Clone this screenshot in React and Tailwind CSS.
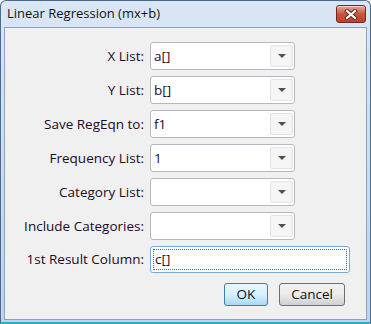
import React from "react";

const rows = [
  { label: "X List:", value: "a[]" },
  { label: "Y List:", value: "b[]" },
  { label: "Save RegEqn to:", value: "f1" },
  { label: "Frequency List:", value: "1" },
  { label: "Category List:", value: "" },
  { label: "Include Categories:", value: "" },
];

const CloseButton = () => (
  <div className="w-[30px] h-[18px] rounded-[3px] border border-[#6d2a22] bg-gradient-to-b from-[#e8a99d] via-[#c9553f] to-[#c2402a] flex items-center justify-center shadow-[inset_0_1px_0_rgba(255,255,255,0.5)]">
    <svg width="14" height="11" viewBox="0 0 14 11">
      <path d="M3 2 L11 9 M11 2 L3 9" stroke="#5a2a24" strokeWidth="4" strokeLinecap="square" />
      <path d="M3 2 L11 9 M11 2 L3 9" stroke="#ffffff" strokeWidth="2.2" strokeLinecap="square" />
    </svg>
  </div>
);

const Combo = ({ value }) => (
  <div className="w-[145px] h-[28px] rounded-[3px] border border-[#b5b8c0] bg-white flex items-center pl-[3px] pr-[1px]">
    <span className="flex-1 text-[13.5px] text-[#1b0a2a]">{value}</span>
    <div className="w-[23px] h-[22px] rounded-[2px] border border-[#e3e3e3] bg-[#f5f5f5] flex items-center justify-center">
      <svg width="8" height="4" viewBox="0 0 8 4">
        <path d="M0 0 H8 L4 4 Z" fill="#505050" />
      </svg>
    </div>
  </div>
);

const Row = ({ label, children }) => (
  <div className="flex items-center gap-[6px]">
    <div className="w-[139px] text-right text-[13.5px] text-[#1b0a2a] whitespace-nowrap">{label}</div>
    {children}
  </div>
);

export default function App() {
  return (
    <div
      className="w-[371px] h-[324px] flex flex-col bg-gradient-to-b from-[#d9e6f5] to-[#bdd3ee] border border-[#4d6a8c] rounded-t-[6px] border-b-2 border-b-[#35a7c8]"
      style={{ fontFamily: '"Open Sans", "DejaVu Sans", sans-serif' }}
    >
      <div className="h-[26px] flex items-center justify-between pl-[6px] pr-[4px]">
        <span className="text-[13px] text-[#141414]">Linear Regression (mx+b)</span>
        <CloseButton />
      </div>
      <div className="flex-1 mx-[3px] mb-[2px] bg-[#f0f0f0] border border-[#8aa2c0] flex flex-col pt-[14px]">
        <div className="flex flex-col gap-[6px]">
          {rows.map((r) => (
            <Row key={r.label} label={r.label}>
              <Combo value={r.value} />
            </Row>
          ))}
          <Row label="1st Result Column:">
            <div className="w-[200px] h-[27px] rounded-[3px] border border-[#7aa9d8] bg-white p-[2px]">
              <div className="h-full border border-dotted border-[#3d6b9a] flex items-center pl-[1px] text-[13.5px] text-[#1b0a2a]">
                c[]
              </div>
            </div>
          </Row>
        </div>
        <div className="flex justify-end gap-[11px] pr-[21px] mt-[10px]">
          <button className="w-[44px] h-[23px] rounded-[3px] border border-[#3c7fb1] bg-gradient-to-b from-[#eaf6fd] via-[#d9f0fc] to-[#a7d9f5] text-[13.5px] text-[#111]">
            OK
          </button>
          <button className="w-[66px] h-[23px] rounded-[3px] border border-[#707070] bg-gradient-to-b from-[#f2f2f2] via-[#ebebeb] to-[#cfcfcf] text-[13.5px] text-[#111]">
            Cancel
          </button>
        </div>
      </div>
    </div>
  );
}
